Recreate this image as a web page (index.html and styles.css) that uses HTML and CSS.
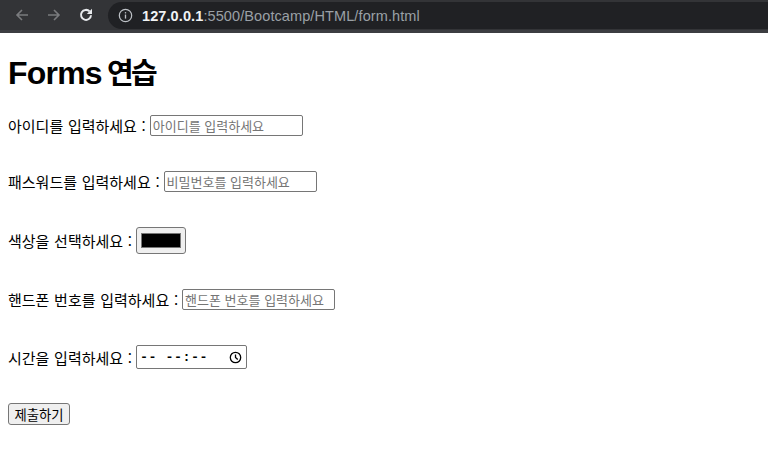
FILE: index.html
```html
<!DOCTYPE html>
<html lang="ko">
<head>
<meta charset="utf-8">
<title>Forms 연습</title>
<link rel="stylesheet" href="styles.css">
</head>
<body>
<header class="chrome">
  <div class="nav">
    <svg class="nav-icon dim" viewBox="0 0 16 16" width="16" height="16"><path d="M14 8H3M8 3L3 8l5 5" fill="none" stroke="currentColor" stroke-width="1.6"/></svg>
    <svg class="nav-icon dim" viewBox="0 0 16 16" width="16" height="16"><path d="M2 8h11M8 3l5 5-5 5" fill="none" stroke="currentColor" stroke-width="1.6"/></svg>
    <svg class="nav-icon" viewBox="0 0 16 16" width="16" height="16"><path d="M13 8.2A5 5 0 1 1 11.6 4.4" fill="none" stroke="currentColor" stroke-width="2"/><path d="M14 1.8V7H8.8z" fill="currentColor"/></svg>
  </div>
  <div class="omnibox">
    <svg class="info" viewBox="0 0 16 16" width="15" height="15"><circle cx="8" cy="8" r="6.6" fill="none" stroke="currentColor" stroke-width="1.3"/><rect x="7.3" y="7" width="1.4" height="4.3" fill="currentColor"/><rect x="7.3" y="4.4" width="1.4" height="1.4" fill="currentColor"/></svg>
    <span class="url"><span class="host">127.0.0.1</span>:5500/Bootcamp/HTML/form.html</span>
  </div>
</header>
<main class="page">
  <h1 class="title">Forms <span class="title-ko">연습</span></h1>
  <form class="form">
    <div class="row r1"><label class="lbl" for="uid">아이디를 입력하세요 :</label><input class="text-input" id="uid" type="text" placeholder="아이디를 입력하세요"></div>
    <div class="row r2"><label class="lbl" for="pw">패스워드를 입력하세요 :</label><input class="text-input" id="pw" type="password" placeholder="비밀번호를 입력하세요"></div>
    <div class="row r3"><label class="lbl" for="col">색상을 선택하세요 :</label><span class="color-input" id="col"><span class="swatch"></span></span></div>
    <div class="row r4"><label class="lbl" for="tel">핸드폰 번호를 입력하세요 :</label><input class="text-input" id="tel" type="tel" placeholder="핸드폰 번호를 입력하세요"></div>
    <div class="row r5"><label class="lbl" for="tm">시간을 입력하세요 :</label><span class="time-input" id="tm"><span class="time-text">-- --:--</span><svg class="clock" viewBox="0 0 14 14" width="13" height="13"><circle cx="7" cy="7" r="5.6" fill="none" stroke="#000" stroke-width="1.4"/><path d="M7 3.8V7l2.4 2.2" fill="none" stroke="#000" stroke-width="1.4"/></svg></span></div>
    <div class="row r6"><button class="btn" type="button">제출하기</button></div>
  </form>
</main>
</body>
</html>
```

FILE: styles.css
```css
html, body {
  margin: 0;
  padding: 0;
  background: #ffffff;
}
body {
  font-family: "Liberation Sans", "Noto Sans CJK KR", sans-serif;
  color: #000;
}
.chrome {
  height: 30px;
  background: #333437;
  border-bottom: 3px solid #3c3d41;
  display: flex;
  align-items: center;
  box-sizing: content-box;
}
.nav {
  display: flex;
  align-items: center;
  gap: 16px;
  padding-left: 14px;
  width: 94px;
  box-sizing: border-box;
}
.nav-icon {
  color: #e8eaed;
  display: block;
}
.nav-icon.dim {
  color: #7a7b7e;
}
.omnibox {
  flex: 1;
  height: 27px;
  margin-top: 1px;
  background: #202124;
  border-radius: 14px 0 0 14px;
  display: flex;
  align-items: center;
  padding-left: 10px;
  margin-left: 14px;
}
.info {
  color: #bdc1c6;
  display: block;
}
.url {
  margin-left: 9px;
  font-family: "Liberation Sans", sans-serif;
  font-size: 14.5px;
  color: #9aa0a6;
  letter-spacing: 0.1px;
}
.host {
  color: #f1f3f4;
  font-weight: bold;
}
.page {
  padding: 0 8px;
}
.title {
  margin: 18px 0 19px;
  font-size: 32px;
  line-height: 40px;
  font-weight: bold;
  letter-spacing: -0.8px;
  word-spacing: -3px;
  font-family: "Liberation Sans", "Noto Sans CJK KR", sans-serif;
}
.title-ko {
  font-family: "Noto Sans CJK KR", sans-serif;
  font-size: 29px;
  letter-spacing: -2.5px;
}
.form {
  display: flex;
  flex-direction: column;
  gap: 30px;
}
.row {
  display: flex;
  align-items: center;
  height: 26px;
}
.r3 { height: 32px; }
.r5 { height: 30px; }
.r6 { height: 24px; }
.lbl {
  font-family: "Noto Sans CJK KR", sans-serif;
  font-size: 15px;
  letter-spacing: 0;
  word-spacing: 0.5px;
  margin-right: 4px;
}
.text-input {
  box-sizing: border-box;
  width: 153px;
  height: 21px;
  border: 1px solid #767676;
  border-radius: 2px;
  padding: 1px 2px;
  font-family: "Noto Sans CJK KR", sans-serif;
  font-size: 13px;
  background: #fff;
  outline: none;
}
.text-input::placeholder {
  color: #757575;
}
.color-input {
  box-sizing: border-box;
  width: 50px;
  height: 27px;
  border: 1px solid #767676;
  border-radius: 3px;
  background: #efefef;
  display: flex;
  align-items: center;
  justify-content: center;
}
.swatch {
  display: block;
  width: 40px;
  height: 15px;
  box-sizing: border-box;
  border: 1px solid #777;
  background: #000;
}
.time-input {
  box-sizing: border-box;
  width: 111px;
  height: 24px;
  border: 1px solid #767676;
  border-radius: 2px;
  display: flex;
  align-items: center;
  justify-content: space-between;
  padding: 0 4px 0 3px;
}
.time-text {
  font-family: "Liberation Mono", monospace;
  font-size: 13.33px;
  font-weight: bold;
  letter-spacing: 0.5px;
}
.clock {
  display: block;
}
.btn {
  box-sizing: border-box;
  width: 62px;
  height: 22px;
  border: 1px solid #767676;
  border-radius: 3px;
  background: #efefef;
  font-family: "Noto Sans CJK KR", sans-serif;
  font-size: 13.33px;
  padding: 0;
  color: #000;
}
```
